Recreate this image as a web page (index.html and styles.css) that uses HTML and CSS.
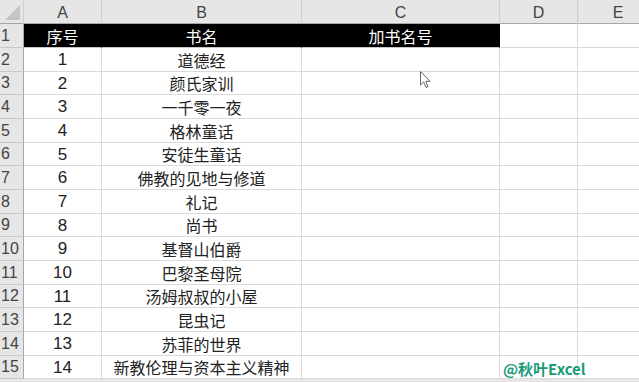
FILE: index.html
```html
<!DOCTYPE html>
<html>
<head>
  <title>书名号</title>
  <link rel="stylesheet" href="styles.css">
</head>
<body>
  <div class="sheet">
    <div class="grid">
      <div class="corner"><span class="tri"></span></div>
      <div class="colhead">A</div>
      <div class="colhead">B</div>
      <div class="colhead">C</div>
      <div class="colhead">D</div>
      <div class="colhead last">E</div>

      <div class="rowhead">1</div>
      <div class="cell title">序号</div>
      <div class="cell title">书名</div>
      <div class="cell title">加书名号</div>
      <div class="cell"></div>
      <div class="cell"></div>

      <div class="rowhead">2</div>
      <div class="cell num">1</div>
      <div class="cell">道德经</div>
      <div class="cell"></div><div class="cell"></div><div class="cell"></div>

      <div class="rowhead">3</div>
      <div class="cell num">2</div>
      <div class="cell">颜氏家训</div>
      <div class="cell"></div><div class="cell"></div><div class="cell"></div>

      <div class="rowhead">4</div>
      <div class="cell num">3</div>
      <div class="cell">一千零一夜</div>
      <div class="cell"></div><div class="cell"></div><div class="cell"></div>

      <div class="rowhead">5</div>
      <div class="cell num">4</div>
      <div class="cell">格林童话</div>
      <div class="cell"></div><div class="cell"></div><div class="cell"></div>

      <div class="rowhead">6</div>
      <div class="cell num">5</div>
      <div class="cell">安徒生童话</div>
      <div class="cell"></div><div class="cell"></div><div class="cell"></div>

      <div class="rowhead">7</div>
      <div class="cell num">6</div>
      <div class="cell">佛教的见地与修道</div>
      <div class="cell"></div><div class="cell"></div><div class="cell"></div>

      <div class="rowhead">8</div>
      <div class="cell num">7</div>
      <div class="cell">礼记</div>
      <div class="cell"></div><div class="cell"></div><div class="cell"></div>

      <div class="rowhead">9</div>
      <div class="cell num">8</div>
      <div class="cell">尚书</div>
      <div class="cell"></div><div class="cell"></div><div class="cell"></div>

      <div class="rowhead">10</div>
      <div class="cell num">9</div>
      <div class="cell">基督山伯爵</div>
      <div class="cell"></div><div class="cell"></div><div class="cell"></div>

      <div class="rowhead">11</div>
      <div class="cell num">10</div>
      <div class="cell">巴黎圣母院</div>
      <div class="cell"></div><div class="cell"></div><div class="cell"></div>

      <div class="rowhead">12</div>
      <div class="cell num">11</div>
      <div class="cell">汤姆叔叔的小屋</div>
      <div class="cell"></div><div class="cell"></div><div class="cell"></div>

      <div class="rowhead">13</div>
      <div class="cell num">12</div>
      <div class="cell">昆虫记</div>
      <div class="cell"></div><div class="cell"></div><div class="cell"></div>

      <div class="rowhead">14</div>
      <div class="cell num">13</div>
      <div class="cell">苏菲的世界</div>
      <div class="cell"></div><div class="cell"></div><div class="cell"></div>

      <div class="rowhead">15</div>
      <div class="cell num">14</div>
      <div class="cell">新教伦理与资本主义精神</div>
      <div class="cell"></div><div class="cell"></div><div class="cell"></div>
    </div>

    <!-- mouse pointer over C3 -->
    <svg class="pointer" width="12" height="18" viewBox="0 0 12 18">
      <path d="M0.5 0.5 L0.5 14 L3.6 11 L6 16.5 L8 15.6 L5.7 10.3 L10 10.3 Z" fill="#fff" stroke="#555" stroke-width="0.9" stroke-linejoin="round"/>
    </svg>

    <div class="mark">@秋叶Excel</div>
  </div>
</body>
</html>
```

FILE: styles.css
```css
body {
  margin: 0;
  background: #fff;
  font-family: "Noto Sans CJK SC", "Microsoft YaHei", sans-serif;
  overflow: hidden;
}
.sheet {
  position: relative;
  width: 639px;
  height: 382px;
  overflow: hidden;
  background: #e6e6e6;
}
.grid {
  display: grid;
  grid-template-columns: 24px 78px 200px 198px 78px 80px;
  grid-template-rows: 24px repeat(5, 24px 24px 23px);
  width: 658px;
}
.grid > div {
  box-sizing: border-box;
  display: flex;
  align-items: center;
  justify-content: center;
  font-size: 16px;
  line-height: 1;
}
.corner {
  position: relative;
  background: #e6e6e6;
  border-right: 1px solid #cfcfcf;
  border-bottom: 1px solid #a6a6a6;
}
.tri {
  position: absolute;
  right: 3px;
  bottom: 3px;
  width: 0;
  height: 0;
  border-left: 15px solid transparent;
  border-bottom: 15px solid #c4c4c4;
}
.colhead {
  background: #e6e6e6;
  color: #444;
  border-right: 1px solid #cfcfcf;
  border-bottom: 1px solid #a6a6a6;
  font-family: "Liberation Sans", "Noto Sans CJK SC", sans-serif;
  padding-top: 2px;
}
.colhead.last {
  border-left: 1px solid #dcdcdc;
}
.rowhead {
  background: #e6e6e6;
  color: #444;
  border-right: 1px solid #a6a6a6;
  border-bottom: 1px solid #c8c8c8;
  justify-content: flex-start !important;
  padding-left: 1px;
  font-family: "Liberation Sans", "Noto Sans CJK SC", sans-serif;
}
.cell {
  background: #fff;
  color: #222;
  border-right: 1px solid #dadada;
  border-bottom: 1px solid #dadada;
}
.cell.title {
  background: #000;
  color: #fff;
  border-right-color: #000;
  border-bottom-color: #c8c8c8;
}
.num {
  font-family: "Liberation Sans", "Noto Sans CJK SC", sans-serif;
  font-size: 17px !important;
}
.pointer {
  position: absolute;
  left: 420px;
  top: 71px;
}
.mark {
  position: absolute;
  left: 503px;
  top: 358px;
  color: #1a9c78;
  font-weight: bold;
  font-size: 15px;
  font-family: "Noto Sans CJK SC", sans-serif;
}
```
